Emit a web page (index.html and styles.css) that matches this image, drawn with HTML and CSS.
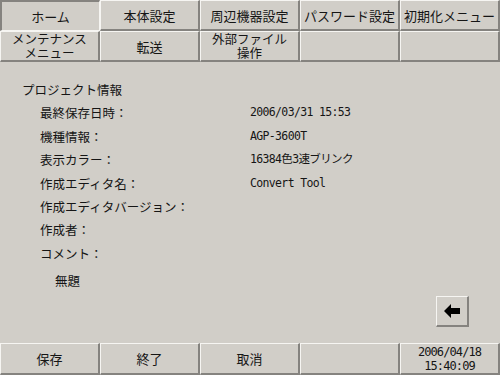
FILE: index.html
```html
<!DOCTYPE html>
<html lang="ja">
<head>
    <meta charset="UTF-8">
    <link rel="stylesheet" href="styles.css">
    <title>プロジェクト情報</title>
</head>
<body>
    <div class="screen">
        <div class="tabs">
            <div class="btn pressed">ホーム</div>
            <div class="btn">本体設定</div>
            <div class="btn">周辺機器設定</div>
            <div class="btn">パスワード設定</div>
            <div class="btn">初期化メニュー</div>
            <div class="btn two-line">メンテナンス<br>メニュー</div>
            <div class="btn">転送</div>
            <div class="btn two-line">外部ファイル<br>操作</div>
            <div class="btn"></div>
            <div class="btn"></div>
        </div>

        <div class="content">
            <div class="info">
                <div class="heading">プロジェクト情報</div>
                <div class="row"><span class="label">最終保存日時：</span><span class="value">2006/03/31 15:53</span></div>
                <div class="row"><span class="label">機種情報：</span><span class="value">AGP-3600T</span></div>
                <div class="row"><span class="label">表示カラー：</span><span class="value">16384色3速ブリンク</span></div>
                <div class="row"><span class="label">作成エディタ名：</span><span class="value">Convert Tool</span></div>
                <div class="row"><span class="label">作成エディタバージョン：</span></div>
                <div class="row"><span class="label">作成者：</span></div>
                <div class="row"><span class="label">コメント：</span></div>
                <div class="comment">無題</div>
            </div>
            <div class="actions">
                <div class="btn back">
                    <svg width="16" height="14" viewBox="0 0 16 14">
                        <path d="M0 7 L7 0 L7 4 L16 4 L16 10 L7 10 L7 14 Z" fill="#000"/>
                    </svg>
                </div>
            </div>
        </div>

        <div class="footer">
            <div class="btn">保存</div>
            <div class="btn">終了</div>
            <div class="btn">取消</div>
            <div class="btn"></div>
            <div class="btn clock">2006/04/18<br>15:40:09</div>
        </div>
    </div>
</body>
</html>
```

FILE: styles.css
```css
body {
    margin: 0;
    padding: 0;
    background-color: #d1cec8;
    font-family: "Noto Sans CJK JP", "DejaVu Sans", sans-serif;
    color: #151515;
}

.screen {
    width: 500px;
    height: 375px;
    display: flex;
    flex-direction: column;
}

.tabs {
    display: grid;
    grid-template-columns: repeat(5, 1fr);
    grid-template-rows: 31px 31px;
}

.btn {
    box-sizing: border-box;
    display: flex;
    align-items: center;
    justify-content: center;
    text-align: center;
    font-size: 13px;
    background-color: #d1cec8;
    border-top: 1px solid #f6f5f2;
    border-left: 1px solid #f6f5f2;
    border-right: 2px solid #85837f;
    border-bottom: 2px solid #85837f;
}

.btn.pressed {
    border-top: 2px solid #85837f;
    border-left: 2px solid #85837f;
    border-right: 1px solid #f6f5f2;
    border-bottom: 1px solid #f6f5f2;
}

.two-line {
    font-size: 12.5px;
    line-height: 14px;
}

.content {
    flex: 1;
    display: flex;
    flex-direction: column;
}

.info {
    padding: 16px 0 0 22px;
    font-size: 12.5px;
}

.heading,
.row {
    height: 23.4px;
    line-height: 23.4px;
}

.row {
    display: flex;
    padding-left: 18px;
}

.label {
    width: 210px;
}

.value {
    font-family: "DejaVu Sans Mono", "Noto Sans CJK JP", monospace;
    font-size: 11.5px;
    letter-spacing: -0.65px;
}

.comment {
    padding: 4px 0 0 33px;
    line-height: 23.4px;
}

.actions {
    margin-top: auto;
    display: flex;
    justify-content: flex-end;
    padding: 0 31px 16px 0;
}

.back {
    width: 33px;
    height: 31px;
}

.footer {
    display: grid;
    grid-template-columns: repeat(5, 1fr);
    height: 32px;
}

.clock {
    font-family: "DejaVu Sans Mono", monospace;
    font-size: 12px;
    line-height: 14px;
    letter-spacing: -0.9px;
}
```
